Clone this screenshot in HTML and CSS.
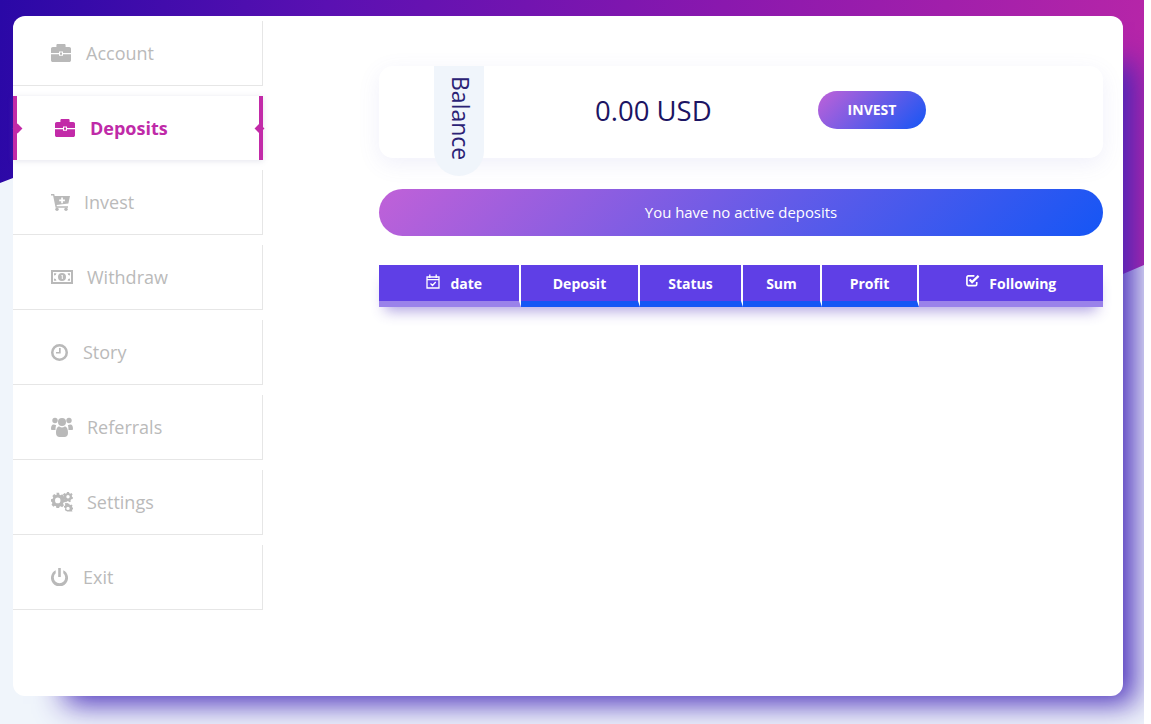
FILE: index.html
```html
<!DOCTYPE html>
<html lang="en">
<head>
  <meta charset="UTF-8" />
  <meta name="viewport" content="width=device-width, initial-scale=1.0" />
  <title>Deposits</title>
  <link rel="stylesheet" href="styles.css">
</head>
<body>
<div class="page">
  <div class="hero"></div>

  <div class="card">
    <ul class="menu">
      <li class="menu-item">
        <svg class="ico ico-case" viewBox="0 0 20 18"><path d="M7 2.5V1h6v1.5h-1.6V2.400H8.600v.1zM5.400 3V1.200C5.400.5 6 0 6.600 0h6.800c.7 0 1.200.5 1.200 1.200V3h3.600c1 0 1.800.8 1.800 1.800V9H12V7.600H8V9H0V4.800C0 3.800.8 3 1.800 3zM0 10.200h8v1.600h4v-1.600h8v6c0 1-.8 1.800-1.800 1.800H1.800C.8 18 0 17.200 0 16.200zM9 8.600h2v2.200H9z"/></svg>
        <span>Account</span>
      </li>
      <li class="menu-item active">
        <svg class="ico ico-case" viewBox="0 0 20 18"><path d="M7 2.5V1h6v1.500h-1.600V2.400H8.600v.1zM5.400 3V1.200C5.400.5 6 0 6.600 0h6.800c.7 0 1.200.5 1.200 1.200V3h3.600c1 0 1.800.8 1.800 1.800V9H12V7.600H8V9H0V4.800C0 3.800.8 3 1.800 3zM0 10.200h8v1.600h4v-1.600h8v6c0 1-.8 1.800-1.800 1.800H1.800C.8 18 0 17.200 0 16.200zM9 8.600h2v2.200H9z"/></svg>
        <span>Deposits</span>
      </li>
      <li class="menu-item">
        <svg class="ico ico-cart" viewBox="0 0 19 17"><path fill-rule="evenodd" d="M0 0h3.200l.5 2H19l-1.600 7.600L5.600 11l.3 1.200H17v1.500H4.600L2.100 1.500H0zM10.200 3.500v2H8.200v1.700h2v2h1.700v-2h2V5.500h-2v-2z"/><circle cx="6" cy="15.300" r="1.700"/><circle cx="15" cy="15.300" r="1.700"/></svg>
        <span>Invest</span>
      </li>
      <li class="menu-item">
        <svg class="ico ico-money" viewBox="0 0 22 14"><path fill-rule="evenodd" d="M0 0h22v14H0zM2 2v10h18V2zM11 3a4 4 0 1 1 0 8 4 4 0 0 1 0-8zM10.300 5v.8h.5V9h1V5zM3 3.200h2.400A2.400 2.400 0 0 1 3 5.600zM19 3.200v2.400a2.400 2.400 0 0 1-2.400-2.400zM3 10.800V8.400a2.400 2.400 0 0 1 2.400 2.400zM19 10.800h-2.400A2.400 2.400 0 0 1 19 8.400z"/></svg>
        <span>Withdraw</span>
      </li>
      <li class="menu-item">
        <svg class="ico ico-clock" viewBox="0 0 17 17"><path fill-rule="evenodd" d="M8.500 0a8.500 8.500 0 1 1 0 17 8.500 8.500 0 0 1 0-17zM8.500 2.500a6 6 0 1 0 0 12 6 6 0 0 0 0-12zM8 4h1.700v5.500H5V8h3z"/></svg>
        <span>Story</span>
      </li>
      <li class="menu-item">
        <svg class="ico ico-users" viewBox="0 0 22 20"><circle cx="4" cy="3.500" r="2.700"/><circle cx="18" cy="3.500" r="2.700"/><circle cx="11" cy="5" r="4"/><path d="M0 12c0-3 .8-4.500 2.500-4.500 1 0 1.800.6 2.700.7-.5 1-.7 2.500-.7 4.800H1.500C.5 13 0 12.700 0 12zM22 12c0-3-.8-4.500-2.500-4.500-1 0-1.800.6-2.700.7.500 1 .7 2.500.7 4.800h3c1 0 1.500-.3 1.500-1zM5 16c0-4 1.200-6.500 3.300-6.500 1 .7 1.700 1 2.700 1s1.700-.3 2.700-1c2.100 0 3.300 2.500 3.300 6.500 0 2.500-1.500 4-3.500 4h-5C6.500 20 5 18.500 5 16z"/></svg>
        <span>Referrals</span>
      </li>
      <li class="menu-item">
        <svg class="ico ico-cogs" viewBox="0 0 22 20"><path fill-rule="evenodd" d="M6 3h3l.4 1.900 1.300.6 1.700-1 2 2-1 1.700.6 1.300 1.900.4v2.800l-1.900.4-.6 1.300 1 1.700-2 2-1.700-1-1.300.6L9 19H6l-.4-1.900-1.300-.6-1.700 1-2-2 1-1.700-.6-1.300L0 12.100 0 9.700l1.900-.4.6-1.300-1-1.700 2-2 1.700 1 1.300-.6zM7.500 8a3 3 0 1 0 0 6 3 3 0 0 0 0-6z" transform="translate(0 -2) scale(.9 .95)"/><path fill-rule="evenodd" d="M16 0h2l.3 1.200 1.100.5 1.100-.6 1.100 1.400-.8 1 .2 1.300 1 .6-.4 1.700-1.300.1-.8 1 .4 1.300-1.600.8-.9-1h-1.300l-.9 1-1.600-.8.400-1.300-.8-1-1.300-.1-.4-1.700 1-.6.200-1.300-.8-1L13.500 1.100l1.100.6 1.100-.5zM17 3a1.700 1.700 0 1 0 0 3.400A1.700 1.700 0 0 0 17 3zM17 11.500l1.300.2.3 1 1 .3.900-.5 1 1-.5 1 .3 1 1 .3v1.400l-1 .3-.3 1 .5 1h-5.200l-2-.9-.5-1 .5-.9-.3-1-1-.3v-1.400l1-.3.3-1-.5-.900 1-1 .9.500 1-.3zM17 14.700a1.700 1.700 0 1 0 0 3.400 1.700 1.700 0 0 0 0-3.400z"/></svg>
        <span>Settings</span>
      </li>
      <li class="menu-item">
        <svg class="ico ico-power" viewBox="0 0 17 18"><path d="M7.200 0h2.600v9H7.200zM4.700 2.300v2.900a5.700 5.700 0 1 0 7.600 0V2.300a8.500 8.500 0 1 1-7.600 0z"/></svg>
        <span>Exit</span>
      </li>
    </ul>

    <div class="main">
      <div class="balance">
        <div class="balance-tab">Balance</div>
        <div class="balance-sum">0.00 USD</div>
        <a class="btn-invest">INVEST</a>
      </div>

      <div class="notice">You have no active deposits</div>

      <table class="deposits">
        <thead>
          <tr>
            <th class="col-date side">
              <svg class="th-ico" viewBox="0 0 14 15"><path fill="none" stroke="#fff" stroke-width="1.300" d="M1 3h12v11H1zM1 5.600h12M3.800 .5v3.500M10.200 .5v3.500M4.500 9.500l2 2 3.200-3.500"/></svg>
              date
            </th>
            <th class="col-deposit">Deposit</th>
            <th class="col-status">Status</th>
            <th class="col-sum">Sum</th>
            <th class="col-profit">Profit</th>
            <th class="col-follow side">
              <svg class="th-ico" viewBox="0 0 15 13"><path fill="none" stroke="#fff" stroke-width="1.800" d="M11.500 8v2.500a1.500 1.500 0 0 1-1.500 1.500H2.500A1.500 1.500 0 0 1 1 10.500V3a1.500 1.500 0 0 1 1.500-1.500H9"/><path fill="none" stroke="#fff" stroke-width="2.400" d="M3.800 5.500l2.700 2.700L13.500 1.500"/></svg>
              Following
            </th>
          </tr>
        </thead>
      </table>
    </div>
  </div>
</div>
</body>
</html>
```

FILE: styles.css
```css
* { box-sizing: border-box; }
html, body { margin: 0; padding: 0; background: #fff; }
body { font-family: 'Open Sans', sans-serif; height: 724px; overflow: hidden; }

.page {
  position: relative;
  width: 1144px;
  height: 724px;
  padding: 16px 0 0 13px;
  overflow: hidden;
  background: #f0f5fb;
}
.hero {
  position: absolute;
  left: 0;
  top: 0;
  width: 100%;
  height: 280px;
  background: linear-gradient(95deg, #2a08a6 0%, #5a10b2 28%, #8a18ae 62%, #b826a8 100%);
  clip-path: polygon(0 0, 100% 0, 100% 265px, 1123px 274px, 13px 178px, 0 183px);
}

.card {
  position: relative;
  display: flex;
  width: 1110px;
  height: 680px;
  background: #fff;
  border-radius: 12px;
  box-shadow: 32px 28px 28px -20px rgba(66, 38, 184, .95);
}

/* sidebar */
.menu { list-style: none; margin: 0; padding: 5px 0 0; width: 250px; flex: none; }
.menu-item {
  display: flex;
  align-items: center;
  gap: 15px;
  height: 65px;
  margin-bottom: 10px;
  padding: 0 0 0 38px;
  font-size: 18px;
  color: #bababa;
  border-right: 1px solid #e6e6e6;
  border-bottom: 1px solid #e6e6e6;
}
.ico { display: block; fill: #b9b9b9; flex: none; }
.ico-case { width: 20px; height: 18px; }
.ico-cart { width: 19px; height: 17px; margin-right: -1px; }
.ico-money { width: 22px; height: 14px; margin-right: -1px; }
.ico-clock { width: 17px; height: 17px; }
.ico-users { width: 22px; height: 20px; margin-right: -1px; }
.ico-cogs { width: 22px; height: 20px; margin-right: -1px; }
.ico-power { width: 17px; height: 18px; }

.menu-item.active {
  position: relative;
  height: 64px;
  font-weight: 700;
  color: #bf2aa8;
  border: 0;
  border-left: 4px solid #c22aa8;
  border-right: 4px solid #c22aa8;
  box-shadow: 0 1px 6px rgba(120, 120, 160, .2);
}
.menu-item.active .ico { fill: #c22aa8; }
.menu-item.active::before,
.menu-item.active::after {
  content: "";
  position: absolute;
  top: 28.500px;
  width: 7px;
  height: 7px;
  background: #c22aa8;
  transform: rotate(45deg);
}
.menu-item.active::before { left: -3.500px; }
.menu-item.active::after { right: -3.500px; }

/* main column */
.main { flex: 1; padding: 50px 20px 0 116px; }

.balance {
  display: flex;
  align-items: center;
  height: 92px;
  padding-bottom: 4px;
  border-radius: 14px;
  background: #fff;
  box-shadow: 0 6px 22px rgba(110, 110, 210, .1);
}
.balance-tab {
  align-self: flex-start;
  width: 50px;
  height: 110px;
  margin-left: 55px;
  padding-top: 10px;
  padding-left: 4px;
  border-radius: 0 0 25px 25px;
  background: #f0f5fb;
  color: #2b2275;
  font-size: 23px;
  line-height: 46px;
  writing-mode: vertical-rl;
}
.balance-sum { margin-left: 111px; width: 223px; font-size: 27.500px; color: #1c1463; }
.btn-invest {
  width: 108px;
  height: 38px;
  border-radius: 19px;
  background: linear-gradient(135deg, #c061d8 0%, #1556f5 100%);
  color: #fff;
  font-size: 14px;
  font-weight: 700;
  line-height: 38px;
  text-align: center;
}

.notice {
  height: 47px;
  margin-top: 31px;
  border-radius: 24px;
  background: linear-gradient(135deg, #c061d8 0%, #1556f5 100%);
  color: #fff;
  font-size: 14.900px;
  line-height: 47px;
  text-align: center;
}

.deposits {
  width: 724px;
  margin-top: 29px;
  border-collapse: separate;
  border-spacing: 0;
  table-layout: fixed;
  box-shadow: 0 10px 14px -6px rgba(80, 50, 190, .45);
}
.deposits th {
  height: 42px;
  padding: 0;
  background: #5f3fe6;
  color: #fff;
  font-size: 14px;
  font-weight: 700;
  text-align: center;
  border-right: 2px solid #fff;
  border-bottom: 6px solid #1556f5;
}
.deposits th.side { border-bottom-color: #9a82ea; }
.deposits th:last-child { border-right: 0; }
.th-ico { width: 14px; height: 14px; margin-right: 7px; vertical-align: 1px; }
.col-follow .th-ico { height: 13px; margin-right: 6px; vertical-align: 2px; }
.col-date { width: 142px; padding-left: 10px !important; }
.col-date .th-ico { height: 15px; vertical-align: 0; }
.col-deposit { width: 119px; }
.col-status { width: 103px; }
.col-sum { width: 79px; }
.col-profit { width: 97px; }
.col-follow { width: 184px; }
```
